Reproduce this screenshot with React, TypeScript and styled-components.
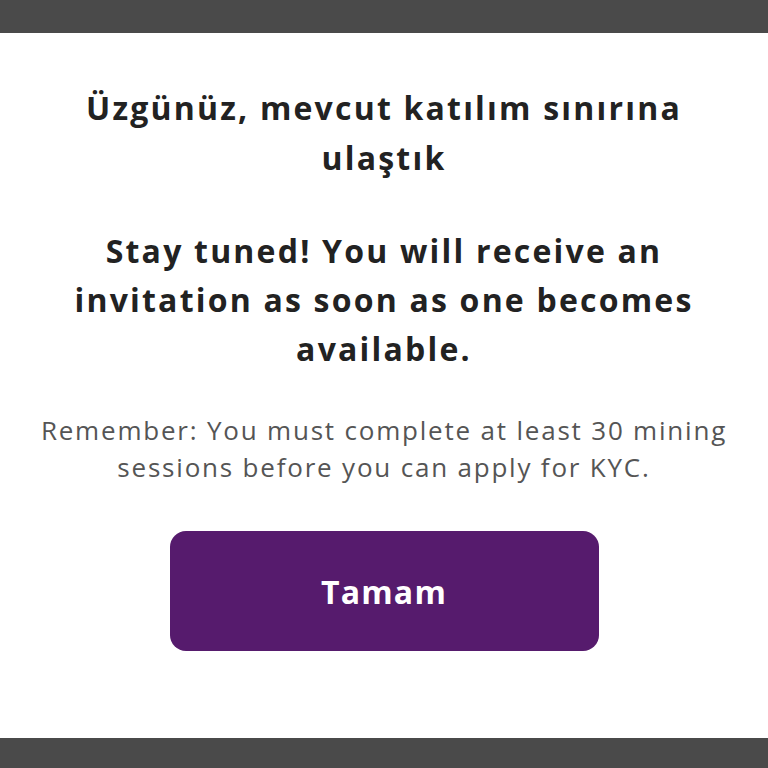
import React from "react";
import styled, { createGlobalStyle } from "styled-components";

const Global = createGlobalStyle`
  html, body { margin: 0; padding: 0; background: #4a4a4a; }
  body { font-family: "Open Sans", "Noto Sans", sans-serif; }
`;

const Screen = styled.div`
  display: flex;
  flex-direction: column;
  height: 768px;
  background: #4a4a4a;
`;

const Bar = styled.div<{ $h: number }>`
  height: ${(p) => p.$h}px;
  flex: none;
  background: #4a4a4a;
`;

const Modal = styled.div`
  flex: 1;
  background: #ffffff;
  display: flex;
  flex-direction: column;
  align-items: center;
  padding: 50px 10px 0;
  box-sizing: border-box;
`;

const Heading = styled.h2`
  margin: 0;
  font-size: 32px;
  line-height: 50px;
  font-weight: 700;
  letter-spacing: 2.2px;
  color: #222222;
  text-align: center;
  white-space: nowrap;
`;

const Message = styled(Heading)`
  margin-top: 43px;
  line-height: 49px;
`;

const Note = styled.p`
  margin: 39px 0 0;
  font-size: 26px;
  line-height: 37px;
  font-weight: 400;
  letter-spacing: 1.8px;
  color: #555555;
  text-align: center;
  white-space: nowrap;
`;

const Button = styled.button`
  margin-top: 45px;
  width: 429px;
  height: 120px;
  border: none;
  border-radius: 16px;
  background: #561b6d;
  color: #ffffff;
  font-family: inherit;
  font-size: 32px;
  font-weight: 700;
  letter-spacing: 1.2px;
  cursor: pointer;
`;

export default function App() {
  return (
    <Screen>
      <Global />
      <Bar $h={33} />
      <Modal>
        <Heading>
          Üzgünüz, mevcut katılım sınırına
          <br />
          ulaştık
        </Heading>
        <Message>
          Stay tuned! You will receive an
          <br />
          invitation as soon as one becomes
          <br />
          available.
        </Message>
        <Note>
          Remember: You must complete at least 30 mining
          <br />
          sessions before you can apply for KYC.
        </Note>
        <Button>Tamam</Button>
      </Modal>
      <Bar $h={30} />
    </Screen>
  );
}
